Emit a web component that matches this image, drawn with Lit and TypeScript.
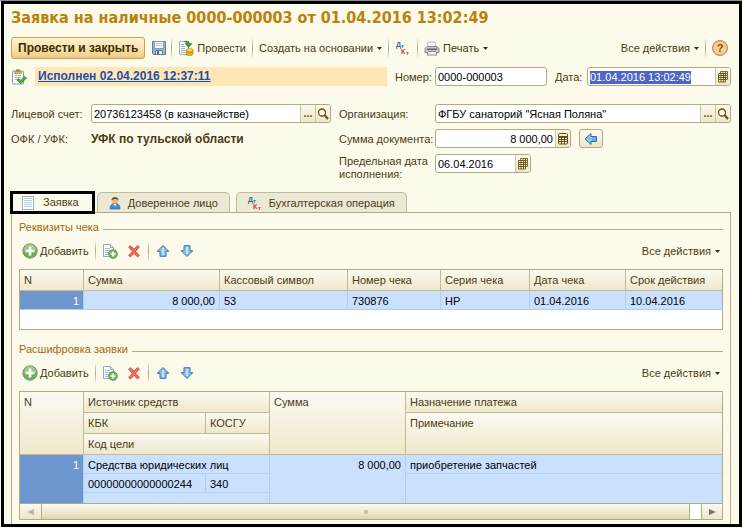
import { LitElement, html, css, svg, nothing } from "lit";
import { customElement, query } from "lit/decorators.js";

const iconSave = svg`<svg width="16" height="16" viewBox="0 0 16 16">
  <path d="M1.5 1.5h13v13h-12l-1-1z" fill="#9db9cc" stroke="#587f9c"/>
  <path d="M3.5 1.500h9v7h-9z" fill="#f4f7f9" stroke="#7c9db4"/>
  <path d="M5 3.500h6M5 5.500h6" stroke="#b9c6cf"/>
  <path d="M4.500 10.500h7v4h-7z" fill="#e8edf0" stroke="#587f9c"/><path d="M6 11h2v3h-2z" fill="#456d8b"/></svg>`;

const iconPost = svg`<svg width="16" height="16" viewBox="0 0 16 16">
  <path d="M1.500 1.500h9v13h-9z" fill="#fdfefe" stroke="#9fb6c4"/>
  <path d="M3 4.500h3M3 6.500h4M3 8.500h4M3 10.500h4M3 12.500h4" stroke="#9ab0bf"/>
  <path d="M6 1.500c3-1 5 0 5.500 2h2.500l-3.500 4-3.500-4h2.300c-.4-1-1.500-1.400-3.300-2z" fill="#3f9a3a" stroke="#2d7c2b" stroke-width=".6"/>
  <path d="M8 10v4c0 2 7 2 7 0v-4z" fill="#e9b52e" stroke="#b98512" stroke-width=".7"/>
  <path d="M8 12c1 1.500 6 1.500 7 0" fill="none" stroke="#b98512" stroke-width=".7"/>
  <ellipse cx="11.500" cy="10" rx="3.500" ry="1.400" fill="#ffe27a" stroke="#b98512" stroke-width=".7"/></svg>`;

const iconDtKt = svg`<svg width="16" height="16" viewBox="0 0 16 16" font-family="Liberation Sans, sans-serif" font-weight="bold">
  <text x="1" y="7" font-size="7" fill="#2f6f92">Д</text><text x="6" y="8" font-size="6" fill="#2f6f92">т</text>
  <text x="6" y="14" font-size="7" fill="#c8402c">К</text><text x="11" y="15" font-size="6" fill="#c8402c">т</text></svg>`;

const iconPrint = svg`<svg width="16" height="16" viewBox="0 0 16 16">
  <path d="M4 2h7l1 5H3.500z" fill="#fff" stroke="#a7a7ad" stroke-width=".8"/>
  <path d="M3 6.500h10l2 2v4H1v-4z" fill="#c9cacf" stroke="#74757c" stroke-width=".8"/>
  <path d="M3 8.500h10v1.500h-10z" fill="#62636b"/>
  <path d="M4 11.500h8l1 3.500H3z" fill="#f3efec" stroke="#8b6f68" stroke-width=".8"/>
  <path d="M12 8h1.500" stroke="#d26a4a"/></svg>`;

const iconStatus = svg`<svg width="16" height="16" viewBox="0 0 16 16">
  <rect x="1.500" y="2" width="11" height="13" rx="1" fill="#fff" stroke="#8b9aa0"/>
  <path d="M3.500 2.500h7v2h-7z" fill="#e8b64c" stroke="#a9863a" stroke-width=".7"/><path d="M5 1.200h4" stroke="#8c7747" stroke-width="1.400"/>
  <path d="M4 6.500h6M4 8.500h6M4 10.500h3" stroke="#a9b6bd"/>
  <path d="M6 11l1.800-1.600 2 2 4-3.900L15.500 9l-5.700 5.800z" fill="#48b234" stroke="#23801b" stroke-width=".7"/></svg>`;

const iconCalendar = svg`<svg width="12" height="12" viewBox="0 0 12 12">
  <path d="M3.500 .500h7v8h-7zM3.500 2.500h7M3.500 4.500h7M3.500 6.500h7M6 .500v8M8.500 .500v8" fill="#f6f1dc" stroke="#7d6220" stroke-width=".9"/>
  <path d="M1.500 2.500h7v9h-7z" fill="#f6f1dc"/><path d="M1.500 2.500h7v8.500h-7zM1.500 4.500h7M1.500 6.500h7M1.500 8.500h7M4 2.500v8.500M6.500 2.500v8.500" fill="none" stroke="#6b5010" stroke-width=".9"/></svg>`;

const iconCalc = svg`<svg width="12" height="12" viewBox="0 0 12 12">
  <rect x="1.500" y=".5" width="9" height="10.500" rx="1" fill="#f6f1dc" stroke="#6b5010"/>
  <path d="M2 3.500h8M2 4.500h8M2 6.500h8M2 8.500h8M4.500 4v7M7.500 4v7" stroke="#6b5010"/></svg>`;

const iconSearch = svg`<svg width="12" height="12" viewBox="0 0 12 12">
  <circle cx="5" cy="4.500" r="3.500" fill="#fffdf2" stroke="#6b5010" stroke-width="1.300"/>
  <path d="M7.500 7l3.500 4" stroke="#6b5010" stroke-width="2"/></svg>`;

const iconBack = svg`<svg width="14" height="14" viewBox="0 0 14 14">
  <path d="M1 7l6-5.500v3h5.500v5H7v3z" fill="#8cc4ea" stroke="#35719f"/><path d="M9 5v4M11 5v4" stroke="#4f96c6"/></svg>`;

const iconAdd = svg`<svg width="16" height="16" viewBox="0 0 16 16">
  <circle cx="8" cy="8" r="7.200" fill="#6fae5c" stroke="#6f9a68"/>
  <path d="M2 7a6 6 0 0 1 12 0c-3 1.500-9 1.500-12 0z" fill="#9bcb8a"/>
  <path d="M8 3.500v9M3.500 8h9" stroke="#fff" stroke-width="2.600"/></svg>`;

const iconCopy = svg`<svg width="16" height="16" viewBox="0 0 16 16">
  <path d="M1.500 1.500h7l3 3v9h-10z" fill="#fbfdfe" stroke="#93abba"/><path d="M8.500 1.500v3h3" fill="#dbe6ec" stroke="#93abba"/>
  <path d="M3 5.500h5M3 7.500h5M3 9.500h4M3 11.500h3" stroke="#a6bac7"/>
  <circle cx="11" cy="11" r="4.300" fill="#7cb765" stroke="#5c8f4f"/><path d="M11 8.500v5M8.500 11h5" stroke="#fff" stroke-width="1.600"/></svg>`;

const iconDelete = svg`<svg width="16" height="16" viewBox="0 0 16 16">
  <path d="M2.500 4l2-1.500L8 6 11.500 2.500l2 1.500-3.800 4.300 3.800 4.200-2 1.500L8 10.500 4.500 14l-2-1.500 3.800-4.200z" fill="#ef6a5a" stroke="#cf4a3e" stroke-width=".7"/></svg>`;

const iconUp = svg`<svg width="16" height="16" viewBox="0 0 16 16">
  <path d="M8 2.500l5.800 5.800H11v5H5v-5H2.200z" fill="#8cc2ea" stroke="#3b76a8"/><path d="M8 5v7" stroke="#c4e2f7" stroke-width="2"/></svg>`;

const iconDown = svg`<svg width="16" height="16" viewBox="0 0 16 16">
  <path d="M8 13.500L2.200 7.700H5v-5h6v5h2.800z" fill="#8cc2ea" stroke="#3b76a8"/><path d="M8 4v7" stroke="#c4e2f7" stroke-width="2"/></svg>`;

const iconSheet = svg`<svg width="14" height="14" viewBox="0 0 14 14">
  <path d="M1.500 .500h11v13h-11z" fill="#fff" stroke="#8fb0c6"/>
  <path d="M3 2.500h8M3 4.500h8M3 6.500h8M3 8.500h8M3 10.500h8" stroke="#b4cad8"/></svg>`;

const iconPerson = svg`<svg width="14" height="14" viewBox="0 0 14 14">
  <path d="M2 13c0-4 2-5.500 5-5.500s5 1.500 5 5.500z" fill="#3f8fcb" stroke="#2c6c9d" stroke-width=".7"/>
  <path d="M5.500 8L7 10.500 8.500 8z" fill="#fff"/>
  <circle cx="7" cy="4.200" r="3.300" fill="#efb87b"/><path d="M3.500 4.500C3 0 11 0 10.500 4.500 9.500 2.500 5 2.500 3.500 4.500z" fill="#6e4521"/></svg>`;

const caret = svg`<svg class="caret" width="5" height="3" viewBox="0 0 5 3"><path d="M0 0h5L2.500 3z" fill="#3d3009"/></svg>`;

const arrow = (d: string, fill: string) =>
  svg`<svg width="8" height="8" viewBox="0 0 8 8"><path d=${d} fill=${fill}/></svg>`;

const checkColumns = ["Сумма", "Кассовый символ", "Номер чека", "Серия чека", "Дата чека", "Срок действия"];
const checkRow = ["8 000,00", "53", "730876", "НР", "01.04.2016", "10.04.2016"];

@customElement("app-root")
export class AppRoot extends LitElement {
  @query("#date") private dateInput!: HTMLInputElement;

  static styles = css`
    :host {
      display: block;
      min-height: 100vh;
      box-sizing: border-box;
      padding-left: 1px;
      border-top: 1px solid #8b958f;
      background: #fcfaeb;
      color: #4a3c12;
      font: 11px/13px "Liberation Sans", Arial, sans-serif;
    }
    * { box-sizing: border-box; }
    svg { display: block; flex: none; }
    button, input { font: inherit; color: inherit; margin: 0; }
    button { display: flex; align-items: center; padding: 0; border: 0; background: none; white-space: nowrap; }
    .frame { border: 3px solid #000; padding: 5px 8px 4px 7px; }
    h1 {
      margin: 0;
      font: bold 16px/18px "DejaVu Sans Condensed", "DejaVu Sans", sans-serif;
      color: #b9820a;
    }
    .toolbar { display: flex; align-items: center; height: 22px; }
    .main-bar { margin-top: 10px; padding-right: 3px; }
    .primary {
      height: 22px;
      padding: 0 6px;
      border: 1px solid #c9a24c;
      border-radius: 3px;
      background: linear-gradient(#fff3d3, #f8dfa6 60%, #ecca84);
      font-weight: bold;
      font-size: 12px;
      color: #3d2e06;
    }
    .sep { width: 1px; height: 18px; background: linear-gradient(#e9e4cb, #aca581, #e9e4cb); }
    .gap { gap: 3px; }
    .add { gap: 2px; }
    .grow { flex: 1; min-width: 0; }
    .caret { margin-left: 1px; }
    .help {
      width: 16px; height: 16px;
      justify-content: center;
      border: 1px solid #a98a61;
      border-radius: 50%;
      background: radial-gradient(#ffe2b4, #f3b263);
      font-weight: bold;
      color: #7a4c14;
    }
    .m4 { margin-left: 4px; } .m6 { margin-left: 6px; } .m8 { margin-left: 8px; }
    .line { display: flex; align-items: center; }
    .status { margin-top: 8px; height: 19px; }
    .banner { height: 19px; margin-left: 8px; padding: 3px; background: #ffe6b4; font-weight: bold; line-height: 13px; font-size: 12px; }
    .banner a { color: #1f4fa8; }
    .field {
      display: flex;
      height: 19px;
      border: 1px solid #b3aa80;
      border-radius: 3px;
      background: #fff;
      overflow: hidden;
    }
    .field input { flex: 1; min-width: 0; width: 0; border: 0; padding: 1px 2px 0; background: none; outline: none; color: #000; }
    .field input::selection { background: #4b67c4; color: #fff; }
    .field button { width: 15px; justify-content: center; border-left: 1px solid #cdc6a2; background: linear-gradient(#fbf9ee, #ece6cb); color: #6b5010; }
    .field .dots { font-weight: bold; }
    .w-num { flex: none; width: 40px; } .w-date { flex: none; width: 32px; }
    .number { width: 112px; }
    .date { width: 144px; }
    .sum { width: 136px; } .sum input { text-align: right; }
    .limit { width: 96px; }
    .form { display: grid; grid-template-columns: 320px 1fr; column-gap: 8px; row-gap: 6px; margin-top: 18px; }
    .account label, .account .name { width: 80px; }
    label, .account .name, .account b { padding-top: 1px; }
    .account b { font-size: 12px; }
    .org label { width: 96px; }
    .org, .account { display: flex; align-items: center; min-height: 19px; }
    .org.limit-line { align-items: start; grid-column: 2; }
    .square { width: 24px; height: 19px; margin-left: 8px; justify-content: center; border: 1px solid #b3aa80; border-radius: 3px; background: linear-gradient(#fdfcf5, #ece6cb); }
    .tabs { display: flex; align-items: end; margin: 10px 0 -2px -1px; height: 23px; position: relative; }
    .tab { height: 21px; margin-bottom: 1px; padding: 1px 11px 0 10px; gap: 6px; border: 1px solid #c3bc97; border-bottom-color: #b3aa80; border-radius: 5px 5px 0 0; background: #ebe8d6; }
    .tab.active { height: 23px; margin: 0 2px 0 0; padding: 0 13px 0 8px; gap: 8px; border: 3px solid #000; border-radius: 0; background: #fcfaeb; }
    .tab + .tab + .tab { margin-left: 6px; }
    .panel { border: 1px solid #b3aa80; border-bottom: 0; padding: 8px 7px 4px; margin-bottom: -4px; }
    .legend { display: flex; align-items: center; gap: 4px; margin: 0; font: inherit; color: #a3680c; }
    .legend::after { content: ""; flex: 1; height: 1px; margin-top: 3px; background: #b3aa80; }
    .list-bar { margin: 6px 0 7px; padding: 0 3px; }
    .grid { border: 1px solid #b3aa80; background: #fff; }
    .checks { height: 61px; margin-bottom: 13px; }
    table { width: 100%; table-layout: fixed; border-collapse: separate; border-spacing: 0; }
    th, td { text-align: left; vertical-align: top; padding: 4px 4px 0; border-left: 1px solid #c3bb95; overflow: hidden; white-space: nowrap; }
    th { height: 21px; font-weight: normal; background: linear-gradient(#fbfaf3, #efe8ca); border-top: 1px solid #c3bb95; }
    tr:first-child > th { height: 20px; border-top: 0; }
    td { height: 19px; background: #c9e1ff; color: #000; border-color: #b3cdee; border-top: 1px solid #b9d3f4; }
    tbody tr:first-child td { border-top-color: #c3bb95; }
    .checks td { height: 20px; border-bottom: 1px solid #b3cdee; }
    th:first-child.n, td.n { border-left: 0; }
    td.n { background: #6f97cf; color: #fff; text-align: right; }
    .right { text-align: right; }
    .w-n { width: 63px; } .w-136 { width: 136px; } .w-128 { width: 128px; } .w-93 { width: 93px; }
    .w-89 { width: 89px; } .w-96 { width: 96px; } .w-122 { width: 122px; } .w-64 { width: 64px; }
    .detail tr.last td { height: 11px; padding: 0; }
    .scroll { display: flex; height: 16px; border-top: 1px solid #b3aa80; }
    .scroll button { width: 21px; justify-content: center; background: linear-gradient(#fbfaf3, #ece5c8); }
    .thumb { flex: 1; display: flex; align-items: center; justify-content: center; margin-right: 11px; border: solid #b3aa80; border-width: 0 1px; background: linear-gradient(#fbfaf0, #efe8cb 60%, #ddd5b0); }
    .grip { width: 4px; height: 4px; border-radius: 1px; background: #c9c3a6; }
    .scroll .next { border-left: 1px solid #b3aa80; }
  `;

  firstUpdated() {
    this.dateInput.focus();
    this.dateInput.select();
  }

  private listBar() {
    return html`<div class="toolbar list-bar">
      <button class="add">${iconAdd}Добавить</button>
      <span class="sep m6"></span>
      <button class="m6" aria-label="Скопировать">${iconCopy}</button>
      <button class="m8" aria-label="Удалить">${iconDelete}</button>
      <span class="sep m6"></span>
      <button class="m6" aria-label="Вверх">${iconUp}</button>
      <button class="m8" aria-label="Вниз">${iconDown}</button>
      <span class="grow"></span>
      <button class="gap">Все действия${caret}</button>
    </div>`;
  }

  render() {
    return html`<main class="frame">
      <h1>Заявка на наличные 0000-000003 от 01.04.2016 13:02:49</h1>
      <div class="toolbar main-bar">
        <button class="primary">Провести и закрыть</button>
        <button class="m6" aria-label="Записать">${iconSave}</button>
        <span class="sep m4"></span>
        <button class="m6 gap">${iconPost}Провести</button>
        <span class="sep m6"></span>
        <button class="m6 gap">Создать на основании${caret}</button>
        <span class="sep m6"></span>
        <button class="m6" aria-label="Дт Кт">${iconDtKt}</button>
        <span class="sep m6"></span>
        <button class="m6 gap">${iconPrint}Печать${caret}</button>
        <span class="grow"></span>
        <button class="gap">Все действия${caret}</button>
        <span class="sep m6"></span>
        <button class="help m6" aria-label="Справка">?</button>
      </div>

      <div class="line status">
        ${iconStatus}
        <div class="banner grow"><a href="#status">Исполнен 02.04.2016 12:37:11</a></div>
        <label class="m8 w-num" for="number">Номер:</label>
        <div class="field number"><input id="number" value="0000-000003" /></div>
        <label class="m8 w-date" for="date">Дата:</label>
        <div class="field date"><input id="date" value="01.04.2016 13:02:49" /><button aria-label="Календарь">${iconCalendar}</button></div>
      </div>

      <div class="form">
        <div class="account">
          <label for="account">Лицевой счет:</label>
          <div class="field grow"><input id="account" value="20736123458 (в казначействе)" /><button class="dots" aria-label="Выбрать">...</button><button aria-label="Открыть">${iconSearch}</button></div>
        </div>
        <div class="org">
          <label for="org">Организация:</label>
          <div class="field grow"><input id="org" value='ФГБУ санаторий "Ясная Поляна"' /><button class="dots" aria-label="Выбрать">...</button><button aria-label="Открыть">${iconSearch}</button></div>
        </div>
        <div class="account"><span class="name">ОФК / УФК:</span><b>УФК по тульской области</b></div>
        <div class="org">
          <label for="sum">Сумма документа:</label>
          <div class="field sum"><input id="sum" value="8 000,00" /><button aria-label="Калькулятор">${iconCalc}</button></div>
          <button class="square" aria-label="Заполнить">${iconBack}</button>
        </div>
        <div class="org limit-line">
          <label for="limit">Предельная дата исполнения:</label>
          <div class="field limit"><input id="limit" value="06.04.2016" /><button aria-label="Календарь">${iconCalendar}</button></div>
        </div>
      </div>

      <div class="tabs" role="tablist">
        <button class="tab active" role="tab" aria-selected="true">${iconSheet}Заявка</button>
        <button class="tab" role="tab">${iconPerson}Доверенное лицо</button>
        <button class="tab" role="tab">${iconDtKt}Бухгалтерская операция</button>
      </div>

      <section class="panel">
        <h2 class="legend">Реквизиты чека</h2>
        ${this.listBar()}
        <div class="grid checks">
          <table>
            <colgroup><col class="w-n" /><col class="w-136" /><col class="w-128" /><col class="w-93" /><col class="w-89" /><col class="w-96" /><col /></colgroup>
            <thead><tr><th class="n">N</th>${checkColumns.map((c) => html`<th>${c}</th>`)}</tr></thead>
            <tbody><tr><td class="n">1</td>${checkRow.map((v, i) => html`<td class=${i === 0 ? "right" : nothing}>${v}</td>`)}</tr></tbody>
          </table>
        </div>

        <h2 class="legend">Расшифровка заявки</h2>
        ${this.listBar()}
        <div class="grid detail">
          <table>
            <colgroup><col class="w-n" /><col class="w-122" /><col class="w-64" /><col class="w-136" /><col /></colgroup>
            <thead>
              <tr><th class="n" rowspan="3">N</th><th colspan="2">Источник средств</th><th rowspan="3">Сумма</th><th>Назначение платежа</th></tr>
              <tr><th>КБК</th><th>КОСГУ</th><th rowspan="2">Примечание</th></tr>
              <tr><th colspan="2">Код цели</th></tr>
            </thead>
            <tbody>
              <tr><td class="n" rowspan="3">1</td><td colspan="2">Средства юридических лиц</td><td class="right" rowspan="3">8 000,00</td><td>приобретение запчастей</td></tr>
              <tr><td>00000000000000244</td><td>340</td><td rowspan="2"></td></tr>
              <tr class="last"><td colspan="2"></td></tr>
            </tbody>
          </table>
          <div class="scroll">
            <button aria-label="Влево">${arrow("M7 1v6L0 4z", "#b9b6a6")}</button>
            <div class="thumb"><span class="grip"></span></div>
            <button class="next" aria-label="Вправо">${arrow("M1 1v6l7-3z", "#77736a")}</button>
          </div>
        </div>
      </section>
    </main>`;
  }
}
